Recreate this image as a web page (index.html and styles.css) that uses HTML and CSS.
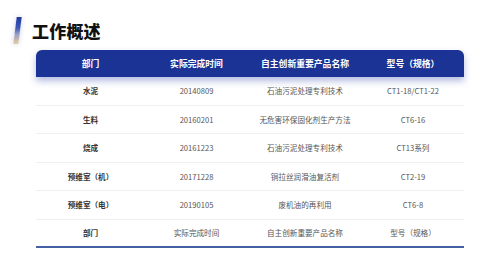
FILE: index.html
```html
<!DOCTYPE html>
<html lang="zh">
<head>
<meta charset="utf-8">
<link rel="stylesheet" href="styles.css">
</head>
<body>
<div class="page">
  <div class="title-row">
    <span class="accent"></span>
    <h1 class="title">工作概述</h1>
  </div>
  <div class="table">
    <div class="thead">
      <div class="cell">部门</div>
      <div class="cell">实际完成时间</div>
      <div class="cell">自主创新重要产品名称</div>
      <div class="cell">型号（规格）</div>
    </div>
    <div class="row">
      <div class="cell dept">水泥</div>
      <div class="cell">20140809</div>
      <div class="cell">石油污泥处理专利技术</div>
      <div class="cell">CT1-18/CT1-22</div>
    </div>
    <div class="row">
      <div class="cell dept">生料</div>
      <div class="cell">20160201</div>
      <div class="cell">无危害环保固化剂生产方法</div>
      <div class="cell">CT6-16</div>
    </div>
    <div class="row">
      <div class="cell dept">烧成</div>
      <div class="cell">20161223</div>
      <div class="cell">石油污泥处理专利技术</div>
      <div class="cell">CT13系列</div>
    </div>
    <div class="row">
      <div class="cell dept">预维室（机）</div>
      <div class="cell">20171228</div>
      <div class="cell">铜拉丝润滑油复活剂</div>
      <div class="cell">CT2-19</div>
    </div>
    <div class="row">
      <div class="cell dept">预维室（电）</div>
      <div class="cell">20190105</div>
      <div class="cell">废机油的再利用</div>
      <div class="cell">CT6-8</div>
    </div>
    <div class="row last">
      <div class="cell dept">部门</div>
      <div class="cell">实际完成时间</div>
      <div class="cell">自主创新重要产品名称</div>
      <div class="cell">型号（规格）</div>
    </div>
  </div>
</div>
</body>
</html>
```
FILE: styles.css
```css
* { box-sizing: border-box; }
html, body {
  margin: 0;
  padding: 0;
  background: #ffffff;
  width: 500px;
  height: 280px;
  overflow: hidden;
}
body {
  font-family: "Noto Sans CJK SC", "Noto Sans", sans-serif;
  color: #333;
}
.page {
  padding: 17px 36px 0 15px;
}
.title-row {
  display: flex;
  align-items: center;
  gap: 12px;
  height: 27px;
}
.accent {
  width: 5px;
  height: 27px;
  transform: skewX(-7deg);
  background: linear-gradient(180deg, #22389c 0%, #3a58b6 40%, #9aa0c4 65%, #e8cf9f 100%);
  box-shadow: 0 0 5px rgba(60, 80, 160, 0.25);
}
.title {
  margin: 0;
  font-size: 17px;
  font-weight: 900;
  color: #111;
  line-height: 27px;
  letter-spacing: 0.2px;
}
.table {
  margin-top: 6px;
  margin-left: 21px;
  width: 428px;
}
.thead, .row {
  display: grid;
  grid-template-columns: 109px 103px 114px 102px;
  align-items: center;
  justify-items: center;
}
.thead {
  height: 27px;
  background: #1b3394;
  border-radius: 6px 6px 0 0;
  box-shadow: 0 4px 7px rgba(40, 60, 170, 0.35);
  color: #fff;
  font-size: 8.8px;
  font-weight: 700;
  position: relative;
}
.row {
  height: 28.5px;
  border-bottom: 1px solid #efefef;
  font-size: 7.6px;
  color: #555;
}
.row.last {
  border-bottom: 2px solid #4660a6;
}
.cell {
  white-space: nowrap;
  text-align: center;
}
.dept {
  font-weight: 700;
  color: #333;
}
```
